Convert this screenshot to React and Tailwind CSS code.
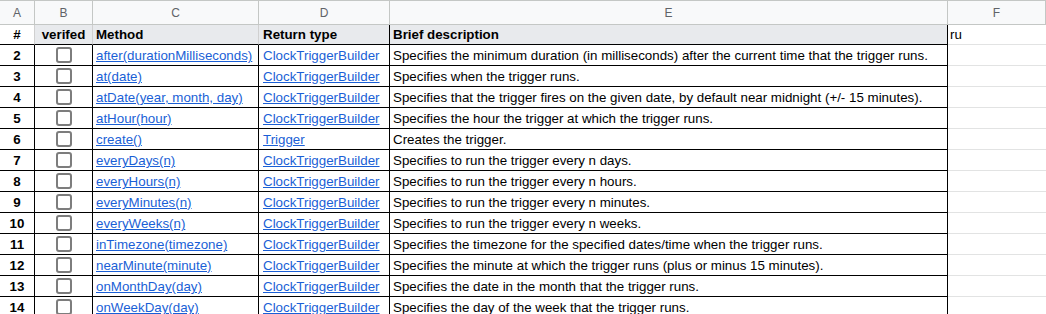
const font = { fontFamily: '"Liberation Sans", Arial, sans-serif' }

const COLS = ['A', 'B', 'C', 'D', 'E', 'F']

const ROWS = [
  { n: 2, method: 'after(durationMilliseconds)', ret: 'ClockTriggerBuilder', plain: true, desc: 'Specifies the minimum duration (in milliseconds) after the current time that the trigger runs.' },
  { n: 3, method: 'at(date)', ret: 'ClockTriggerBuilder', desc: 'Specifies when the trigger runs.' },
  { n: 4, method: 'atDate(year, month, day)', ret: 'ClockTriggerBuilder', desc: 'Specifies that the trigger fires on the given date, by default near midnight (+/- 15 minutes).' },
  { n: 5, method: 'atHour(hour)', ret: 'ClockTriggerBuilder', desc: 'Specifies the hour the trigger at which the trigger runs.' },
  { n: 6, method: 'create()', ret: 'Trigger', desc: 'Creates the trigger.' },
  { n: 7, method: 'everyDays(n)', ret: 'ClockTriggerBuilder', desc: 'Specifies to run the trigger every n days.' },
  { n: 8, method: 'everyHours(n)', ret: 'ClockTriggerBuilder', desc: 'Specifies to run the trigger every n hours.' },
  { n: 9, method: 'everyMinutes(n)', ret: 'ClockTriggerBuilder', desc: 'Specifies to run the trigger every n minutes.' },
  { n: 10, method: 'everyWeeks(n)', ret: 'ClockTriggerBuilder', desc: 'Specifies to run the trigger every n weeks.' },
  { n: 11, method: 'inTimezone(timezone)', ret: 'ClockTriggerBuilder', desc: 'Specifies the timezone for the specified dates/time when the trigger runs.' },
  { n: 12, method: 'nearMinute(minute)', ret: 'ClockTriggerBuilder', desc: 'Specifies the minute at which the trigger runs (plus or minus 15 minutes).' },
  { n: 13, method: 'onMonthDay(day)', ret: 'ClockTriggerBuilder', desc: 'Specifies the date in the month that the trigger runs.' },
  { n: 14, method: 'onWeekDay(day)', ret: 'ClockTriggerBuilder', desc: 'Specifies the day of the week that the trigger runs.' },
]

const cell = 'h-[21px] pt-[2px] border-r border-b border-black flex items-center overflow-hidden whitespace-nowrap'
const link = 'text-[#1a5fd6]'

function Checkbox() {
  return <div className="-mt-[2px] h-[16px] w-[16px] rounded-[3px] border-2 border-[#7d7d7d] bg-white" />
}

export default function App() {
  return (
    <div className="h-[314px] w-[1046px] overflow-hidden bg-white text-[13.33px] text-black" style={font}>
      <div className="grid grid-cols-[35px_58px_166px_131px_558px_98px]">

        {/* column letters */}
        {COLS.map(c => (
          <div key={c} className="h-[25px] border-t border-r border-b border-[#c4c7c5] bg-[#f8f9fa] flex items-center justify-center text-[12px] text-[#5f6368] last:border-r-0">
            {c}
          </div>
        ))}

        {/* header row */}
        <div className="h-[20px] pt-[1px] border-r border-b border-r-[#d0d0d0] border-b-black flex items-center justify-center font-bold">#</div>
        <div className="h-[20px] pt-[1px] border-r border-b border-r-[#d0d0d0] border-b-black bg-[#e8eaed] flex items-center justify-center font-bold">verifed</div>
        <div className="h-[20px] pt-[1px] border-r border-b border-r-[#d0d0d0] border-b-black bg-[#e8eaed] flex items-center pl-[3px] font-bold">Method</div>
        <div className="h-[20px] pt-[1px] border-r border-b border-black bg-[#e8eaed] flex items-center pl-[4px] font-bold">Return type</div>
        <div className="h-[20px] pt-[1px] border-r border-b border-black bg-[#e8eaed] flex items-center pl-[3px] font-bold">Brief description</div>
        <div className="h-[20px] pt-[1px] border-b border-[#e2e3e3] flex items-center pl-[2px]">ru</div>

        {/* rows */}
        {ROWS.map(r => (
          <div key={r.n} className="contents">
            <div className={`${cell} justify-center font-bold`}>{r.n}</div>
            <div className={`${cell} justify-center`}><Checkbox /></div>
            <div className={`${cell} pl-[3px]`}><span className={`${link} underline`}>{r.method}</span></div>
            <div className={`${cell} pl-[4px]`}><span className={`${link} ${r.plain ? '' : 'underline'}`}>{r.ret}</span></div>
            <div className={`${cell} pl-[3px]`}>{r.desc}</div>
            <div className="h-[21px] border-b border-[#e2e3e3]" />
          </div>
        ))}
      </div>
    </div>
  )
}
